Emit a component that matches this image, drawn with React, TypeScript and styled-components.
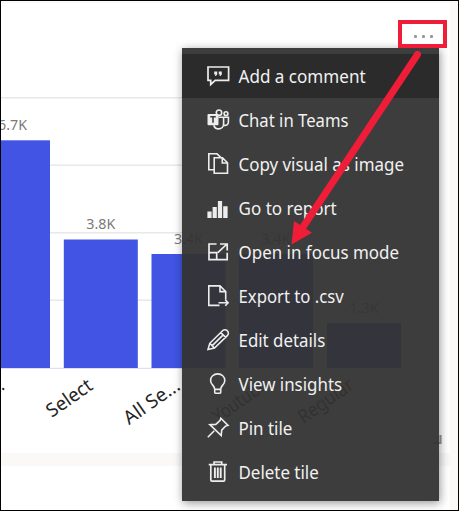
import React from "react";
import styled, { createGlobalStyle } from "styled-components";

const GlobalStyle = createGlobalStyle`
  * { box-sizing: border-box; }
  body { margin: 0; background: #fff; overflow: hidden; }
`;

const Frame = styled.div`
  position: relative;
  width: 459px;
  height: 511px;
  border: 1px solid #000;
  background: #faf9f8;
  font-family: "Noto Sans", "Open Sans", sans-serif;
  overflow: hidden;
`;

const Dashboard = styled.main`
  display: flex;
  flex-direction: column;
  gap: 13px;
  width: 449px;
  height: 509px;
  padding-top: 2px;
`;

const Tile = styled.section`
  height: 450px;
  background: #fff;
`;

const NextTile = styled.section`
  flex: 1;
  background: #fff;
`;

const Chart = styled.svg`
  display: block;
`;

const ValueLabel = styled.text`
  font-size: 14.8px;
  fill: #7a7a7a;
`;

const CategoryLabel = styled.text`
  font-size: 19px;
  fill: #252423;
`;

const Menu = styled.ul`
  position: absolute;
  left: 181px;
  top: 47px;
  width: 257px;
  height: 453px;
  margin: 0;
  padding: 6px 0 7px;
  list-style: none;
  background: rgba(51, 51, 51, 0.95);
  box-shadow: 1px 2px 9px rgba(0, 0, 0, 0.42);
`;

const MenuItem = styled.li<{ $active?: boolean }>`
  display: flex;
  align-items: center;
  gap: 8px;
  height: 44px;
  padding-left: 24px;
  background: ${(p) => (p.$active ? "#2b2b2b" : "transparent")};
  color: #f1f1f1;
`;

const Icon = styled.svg`
  flex: none;
  width: 24px;
  height: 24px;
  fill: none;
  stroke: #ededed;
  stroke-width: 1.6;
`;

const Label = styled.span<{ $stretch: number }>`
  font-size: 18px;
  line-height: 24px;
  white-space: nowrap;
  transform: translateX(0.5px) scaleX(${(p) => p.$stretch});
  transform-origin: left center;
`;

const MoreButton = styled.button`
  position: absolute;
  left: 397px;
  top: 19px;
  width: 49px;
  height: 28px;
  display: flex;
  align-items: center;
  justify-content: center;
  gap: 5px;
  padding: 5px 0 0 2px;
  border: 4px solid #f01d38;
  background: #fff;
`;

const Dot = styled.i`
  width: 3px;
  height: 3px;
  border-radius: 1px;
  background: #999;
`;

const Arrow = styled.svg`
  position: absolute;
  left: -1px;
  top: -1px;
  pointer-events: none;
`;

const gridLines = [97.8, 165.3, 232.8, 300.3];

const bars = [
  { x: 0, right: 50, top: 140.3, label: "6.7K", lx: 12.5, ly: 130 },
  { x: 63.8, right: 137.8, top: 239.5, label: "3.8K", lx: 100.8, ly: 229 },
  { x: 151.5, right: 225.5, top: 254, label: "3.4K", lx: 188.5, ly: 244 },
  { x: 239, right: 313, top: 254, label: "3.4K", lx: 276, ly: 244 },
  { x: 327, right: 401, top: 323, label: "1.3K", lx: 364, ly: 313 },
];

const categories = [
  { text: "...", x: 5.5, y: 388.5, len: 13 },
  { text: "Select", x: 94, y: 388.5, len: 51.5 },
  { text: "All Se...", x: 181.5, y: 388.5, len: 64 },
  { text: "Youtube", x: 269, y: 388, len: 62 },
  { text: "Regular", x: 355, y: 388, len: 63 },
];

const icons: Record<string, React.ReactNode> = {
  comment: (
    <>
      <path d="M2 3H22.6V16.4H9.2L4.7 20.5V16.4H2Z" strokeWidth="1.7" />
      <path d="M8.2 7.6h3v3l-1.4 1.5H8.9l.7-1.7H8.2zM12.8 7.6h3v3l-1.4 1.5h-.9l.7-1.7h-1.4z" fill="#ededed" stroke="none" />
    </>
  ),
  teams: (
    <>
      <rect x="1.5" y="6" width="11" height="11.3" rx="1" fill="#ededed" stroke="none" />
      <path d="M4.2 8.8h5.6M7 8.8v6" stroke="#3d3d3d" strokeWidth="1.6" />
      <circle cx="13" cy="4.7" r="2.7" />
      <circle cx="20" cy="5.7" r="1.9" />
      <path d="M12.5 9.2H17.6V15.7C17.6 19 15.4 20.9 12.7 20.9C10.2 20.9 8.4 19.5 7.8 17.2M17.6 9.2H22.4V14C22.4 16.5 20.3 17.9 17.7 17.2" />
    </>
  ),
  copy: (
    <path d="M8 17.7H2.8V1.8H11l4.2 4M8.2 5.8H16.5l5 5V21.3H8.2ZM16.3 5.8v5.2h5.2" />
  ),
  report: (
    <path d="M1.4 15.5h4.2V22H1.4zM6.6 11h4.2v11H6.6zM11.9 5h4.2v17h-4.2zM17.2 10.3h4.4V22h-4.4z" fill="#ededed" stroke="none" />
  ),
  focus: (
    <path d="M10.5 4H3V19.6H21.2V12.7M3 12.6H10.7V19.6M11.8 12.6L21 4M14 4H21.2V10.4" strokeWidth="1.7" />
  ),
  csv: (
    <path d="M13.5 21.4H2.8V1.9H14L19.7 7.5V15.5M14 1.9V7.6H19.7M12.5 18.8H22M19.2 15.9L22.1 18.8L19.2 21.7" />
  ),
  edit: (
    <path d="M2 21.5L3.8 15.3L16.3 3C17.4 1.4 19.7 1.3 21.2 2.7C22.8 4.1 22.7 6.2 21.3 7.6L8.5 20.1ZM3.8 15.3L8.5 20.1M14.8 4.6L19.7 9.3M6.2 17.6L17.2 6.9" />
  ),
  insight: (
    <path d="M8.7 17.3C8.7 13.2 4.6 13 4.6 8.5C4.6 4.7 7.7 1.9 11.7 1.9S18.8 4.7 18.8 8.5C18.8 13 14.7 13.2 14.7 17.3V20.2Q14.7 21.3 13.6 21.3H9.8Q8.7 21.3 8.7 20.2ZM8.7 17.4H14.7" />
  ),
  pin: (
    <path d="M1.8 21.2L8.3 14.7M14.8 2.3L22 9.4L19.7 10L15.7 14.1L15.2 19.5L3.9 8.7L9.8 8.4L14.2 4.3Z" />
  ),
  trash: (
    <>
      <path d="M2.7 4.6H21M8.1 4.3V2H15.7V4.3M4.8 4.7V19.9Q4.8 21.1 6 21.1H17.5Q18.7 21.1 18.7 19.9V4.7" strokeWidth="1.7" />
      <path d="M8.9 7.4V18M11.8 7.4V18M14.7 7.4V18" strokeWidth="1.9" />
    </>
  ),
};

const items = [
  { icon: "comment", text: "Add a comment", stretch: 0.948 },
  { icon: "teams", text: "Chat in Teams", stretch: 0.927 },
  { icon: "copy", text: "Copy visual as image", stretch: 0.94 },
  { icon: "report", text: "Go to report", stretch: 0.946 },
  { icon: "focus", text: "Open in focus mode", stretch: 0.941 },
  { icon: "csv", text: "Export to .csv", stretch: 0.929 },
  { icon: "edit", text: "Edit details", stretch: 0.937 },
  { icon: "insight", text: "View insights", stretch: 0.938 },
  { icon: "pin", text: "Pin tile", stretch: 0.94 },
  { icon: "trash", text: "Delete tile", stretch: 0.94 },
];

function ColumnChart() {
  return (
    <Chart width="449" height="450" viewBox="1 3 449 450">
      {gridLines.map((y) => (
        <path key={y} d={`M0 ${y}H434`} stroke="#e8e8e8" strokeWidth="1.4" />
      ))}
      <path d="M0 368.3H434" stroke="#d5d8f0" />
      {bars.map((b) => (
        <g key={b.x}>
          <rect x={b.x} y={b.top} width={b.right - b.x} height={368 - b.top} fill="#4154e3" />
          <ValueLabel x={b.lx} y={b.ly} textAnchor="middle" textLength="29" lengthAdjust="spacingAndGlyphs">
            {b.label}
          </ValueLabel>
        </g>
      ))}
      {categories.map((c) => (
        <CategoryLabel
          key={c.text}
          textAnchor="end"
          transform={`translate(${c.x} ${c.y}) rotate(-35)`}
          textLength={c.len}
          lengthAdjust="spacingAndGlyphs"
        >
          {c.text}
        </CategoryLabel>
      ))}
      <path d="M432.5 443H440.5V435" fill="none" stroke="#999" strokeWidth="2.2" />
    </Chart>
  );
}

export default function App() {
  return (
    <>
      <GlobalStyle />
      <Frame>
        <Dashboard>
          <Tile>
            <ColumnChart />
          </Tile>
          <NextTile />
        </Dashboard>
        <Menu>
          {items.map((item, i) => (
            <MenuItem key={item.icon} $active={i === 0}>
              <Icon viewBox="0 0 24 24">{icons[item.icon]}</Icon>
              <Label $stretch={item.stretch}>{item.text}</Label>
            </MenuItem>
          ))}
        </Menu>
        <MoreButton aria-label="More options">
          <Dot />
          <Dot />
          <Dot />
        </MoreButton>
        <Arrow width="459" height="511" viewBox="0 0 459 511">
          <path d="M417.5 54.5L301 230" stroke="#f01d38" strokeWidth="7" strokeLinecap="round" />
          <path d="M291.5 244.5L294 221L312 232.8Z" fill="#f01d38" />
        </Arrow>
      </Frame>
    </>
  );
}
